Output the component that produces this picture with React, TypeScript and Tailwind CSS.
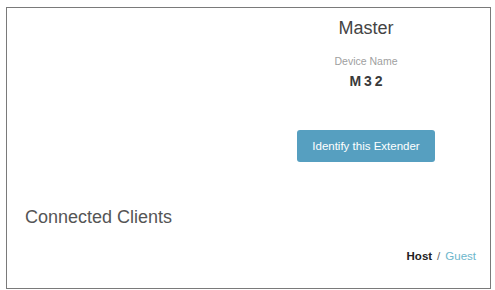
export default function App() {
  return (
    <div className="w-[495px] h-[290px] bg-white pl-[6px] pt-[7px] pr-[4px] pb-[1px]" style={{ fontFamily: '"Liberation Sans", Arial, sans-serif' }}>
      <div className="h-full border border-[#7a7a7a] flex flex-col">
        <div className="flex justify-end pr-[6px]">
          <div className="w-[236px] flex flex-col items-center">
            <div className="mt-[10px] text-[18px] leading-[20px] text-[#444]">Master</div>
            <div className="mt-[17px] text-[10.5px] leading-[12px] text-[#a0a0a0]">Device Name</div>
            <div className="mt-[6px] text-[14px] leading-[16px] font-bold text-[#3a3a3a] [word-spacing:-1px]">M 3 2</div>
            <button className="mt-[41px] w-[138px] h-[32px] rounded-[3px] bg-[#569fc0] text-white text-[11.5px] leading-[14px]">
              Identify this Extender
            </button>
          </div>
        </div>
        <div className="mt-[45px] pl-[18px] text-[18px] leading-[20px] text-[#555]">Connected Clients</div>
        <div className="mt-[22px] flex justify-end pr-[14px] text-[11.5px] leading-[14px]">
          <span className="font-bold text-[#222]">Host</span>
          <span className="text-[#666] mx-[5px]">/</span>
          <span className="text-[#6cb6cc]">Guest</span>
        </div>
      </div>
    </div>
  );
}
